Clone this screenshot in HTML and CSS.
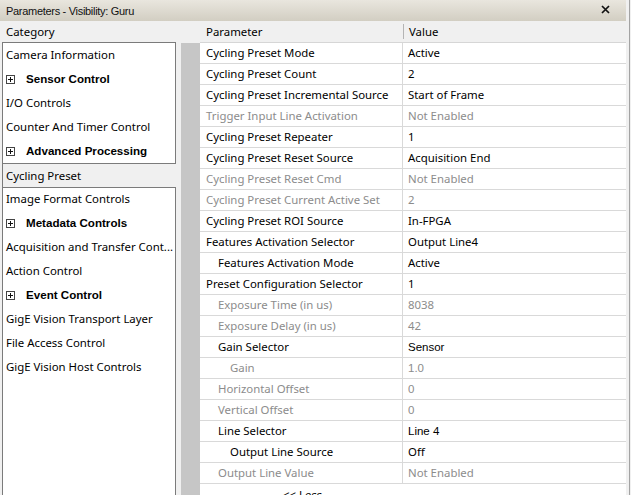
FILE: index.html
```html
<!DOCTYPE html>
<html>
<head>
<meta charset="utf-8">
<link rel="stylesheet" href="styles.css">
</head>
<body>
<div class="screen">
  <div class="app">
    <div class="titlebar">
      <span class="title">Parameters - Visibility: Guru</span>
      <span class="close"><svg width="9" height="9" viewBox="0 0 9 9"><path d="M1 1 L8 8 M8 1 L1 8" stroke="#111" stroke-width="1.7" fill="none"/></svg></span>
    </div>
    <div class="headers">
      <div class="h-cat">Category</div>
      <div class="h-param">Parameter</div>
      <div class="h-sep"></div>
      <div class="h-value">Value</div>
    </div>
    <div class="main">
      <div class="cats">
        <div class="catbox top">
          <div class="cat">Camera Information</div>
          <div class="cat group"><span class="plus"><svg width="9" height="9" viewBox="0 0 9 9"><rect x="0.5" y="0.5" width="8" height="8" fill="#fff" stroke="#444"/><path d="M2 4.5 H7 M4.5 2 V7" stroke="#111" stroke-width="1"/></svg></span>Sensor Control</div>
          <div class="cat">I/O Controls</div>
          <div class="cat">Counter And Timer Control</div>
          <div class="cat group"><span class="plus"><svg width="9" height="9" viewBox="0 0 9 9"><rect x="0.5" y="0.5" width="8" height="8" fill="#fff" stroke="#444"/><path d="M2 4.5 H7 M4.5 2 V7" stroke="#111" stroke-width="1"/></svg></span>Advanced Processing</div>
        </div>
        <div class="cat selected">Cycling Preset</div>
        <div class="catbox bottom">
          <div class="cat">Image Format Controls</div>
          <div class="cat group"><span class="plus"><svg width="9" height="9" viewBox="0 0 9 9"><rect x="0.5" y="0.5" width="8" height="8" fill="#fff" stroke="#444"/><path d="M2 4.5 H7 M4.5 2 V7" stroke="#111" stroke-width="1"/></svg></span>Metadata Controls</div>
          <div class="cat">Acquisition and Transfer Cont...</div>
          <div class="cat">Action Control</div>
          <div class="cat group"><span class="plus"><svg width="9" height="9" viewBox="0 0 9 9"><rect x="0.5" y="0.5" width="8" height="8" fill="#fff" stroke="#444"/><path d="M2 4.5 H7 M4.5 2 V7" stroke="#111" stroke-width="1"/></svg></span>Event Control</div>
          <div class="cat">GigE Vision Transport Layer</div>
          <div class="cat">File Access Control</div>
          <div class="cat">GigE Vision Host Controls</div>
        </div>
      </div>
      <div class="strip"></div>
      <div class="grid">
        <div class="row"><div class="p">Cycling Preset Mode</div><div class="v">Active</div></div>
        <div class="row"><div class="p">Cycling Preset Count</div><div class="v">2</div></div>
        <div class="row"><div class="p">Cycling Preset Incremental Source</div><div class="v">Start of Frame</div></div>
        <div class="row off"><div class="p">Trigger Input Line Activation</div><div class="v">Not Enabled</div></div>
        <div class="row"><div class="p">Cycling Preset Repeater</div><div class="v">1</div></div>
        <div class="row"><div class="p">Cycling Preset Reset Source</div><div class="v">Acquisition End</div></div>
        <div class="row off"><div class="p">Cycling Preset Reset Cmd</div><div class="v">Not Enabled</div></div>
        <div class="row off"><div class="p">Cycling Preset Current Active Set</div><div class="v">2</div></div>
        <div class="row"><div class="p">Cycling Preset ROI Source</div><div class="v">In-FPGA</div></div>
        <div class="row"><div class="p">Features Activation Selector</div><div class="v">Output Line4</div></div>
        <div class="row"><div class="p i1">Features Activation Mode</div><div class="v">Active</div></div>
        <div class="row"><div class="p">Preset Configuration Selector</div><div class="v">1</div></div>
        <div class="row off"><div class="p i1">Exposure Time (in us)</div><div class="v">8038</div></div>
        <div class="row off"><div class="p i1">Exposure Delay (in us)</div><div class="v">42</div></div>
        <div class="row"><div class="p i1">Gain Selector</div><div class="v alt">Sensor</div></div>
        <div class="row off"><div class="p i2">Gain</div><div class="v alt">1.0</div></div>
        <div class="row off"><div class="p i1">Horizontal Offset</div><div class="v alt">0</div></div>
        <div class="row off"><div class="p i1">Vertical Offset</div><div class="v alt">0</div></div>
        <div class="row"><div class="p i1">Line Selector</div><div class="v alt">Line 4</div></div>
        <div class="row"><div class="p i2">Output Line Source</div><div class="v">Off</div></div>
        <div class="row off"><div class="p i1">Output Line Value</div><div class="v">Not Enabled</div></div>
        <div class="less">&lt;&lt; Less</div>
      </div>
    </div>
  </div>
  <div class="edge"></div>
</div>
</body>
</html>
```
FILE: styles.css
```css
html, body {
  margin: 0;
  padding: 0;
}
body {
  width: 631px;
  height: 495px;
  overflow: hidden;
  background: #f0f0f0;
  font-family: "Noto Sans", "Open Sans", sans-serif;
  font-size: 11.4px;
  color: #000;
}
.screen {
  display: flex;
  height: 495px;
}
.app {
  width: 626px;
  display: flex;
  flex-direction: column;
}
.edge {
  width: 3px;
  background: #f0f0f0;
  border-right: 1px solid #a3a3a3;
}
.titlebar {
  height: 21px;
  background: linear-gradient(#e9e6de, #d2cec2);
  display: flex;
  align-items: center;
  justify-content: space-between;
  padding: 0 16px 0 6px;
  box-sizing: border-box;
}
.title {
  font-family: "Liberation Sans", sans-serif;
  font-size: 11px;
  letter-spacing: -0.3px;
  color: #111;
}
.close {
  display: flex;
  margin-top: -3px;
}
.headers {
  height: 21px;
  display: flex;
  align-items: center;
  background: #f0f0f0;
}
.h-cat {
  width: 200px;
  padding-left: 6px;
  box-sizing: border-box;
}
.h-param {
  width: 203px;
  padding-left: 6px;
  box-sizing: border-box;
}
.h-sep {
  width: 1px;
  height: 15px;
  background: #b4b4b4;
}
.h-value {
  padding-left: 5px;
}
.main {
  flex: 1;
  display: flex;
  overflow: hidden;
}
.cats {
  width: 176px;
  padding-left: 2px;
  box-sizing: border-box;
  display: flex;
  flex-direction: column;
}
.catbox {
  background: #fff;
  border: 1px solid #7b7b7b;
}
.catbox.bottom {
  flex: 1;
  border-bottom: none;
}
.cat {
  height: 24px;
  line-height: 24px;
  padding-left: 3px;
  white-space: nowrap;
  overflow: hidden;
}
.cat.group {
  display: flex;
  align-items: center;
  font-family: "Liberation Sans", sans-serif;
  font-weight: bold;
  font-size: 11.6px;
}
.plus {
  display: flex;
  width: 9px;
  height: 9px;
  margin-right: 11px;
}
.cat.selected {
  height: 23px;
  line-height: 23px;
  border-left: 1px solid #7b7b7b;
  padding-left: 3px;
  background: #f0f0f0;
}
.catbox.bottom .cat:first-child {
  height: 23px;
  line-height: 22px;
}
.strip {
  width: 19px;
  margin-left: 5px;
  margin-top: 1px;
  background: #c6c6c6;
}
.grid {
  flex: 1;
  background: #fff;
  border-top: 1px solid #d6d6d6;
}
.row {
  display: flex;
  height: 20px;
  line-height: 20px;
  border-bottom: 1px solid #d9d9d9;
}
.p {
  width: 203px;
  padding-left: 6px;
  box-sizing: border-box;
  border-right: 1px solid #d9d9d9;
  white-space: nowrap;
  overflow: hidden;
}
.p.i1 {
  padding-left: 18px;
}
.p.i2 {
  padding-left: 30px;
}
.v {
  padding-left: 5px;
  white-space: nowrap;
}
.v.alt {
  font-family: "Liberation Sans", sans-serif;
  font-size: 11.5px;
}
.row.off {
  color: #8c8c8c;
}
.less {
  height: 20px;
  line-height: 20px;
  padding-left: 83px;
  padding-top: 1px;
}
```
